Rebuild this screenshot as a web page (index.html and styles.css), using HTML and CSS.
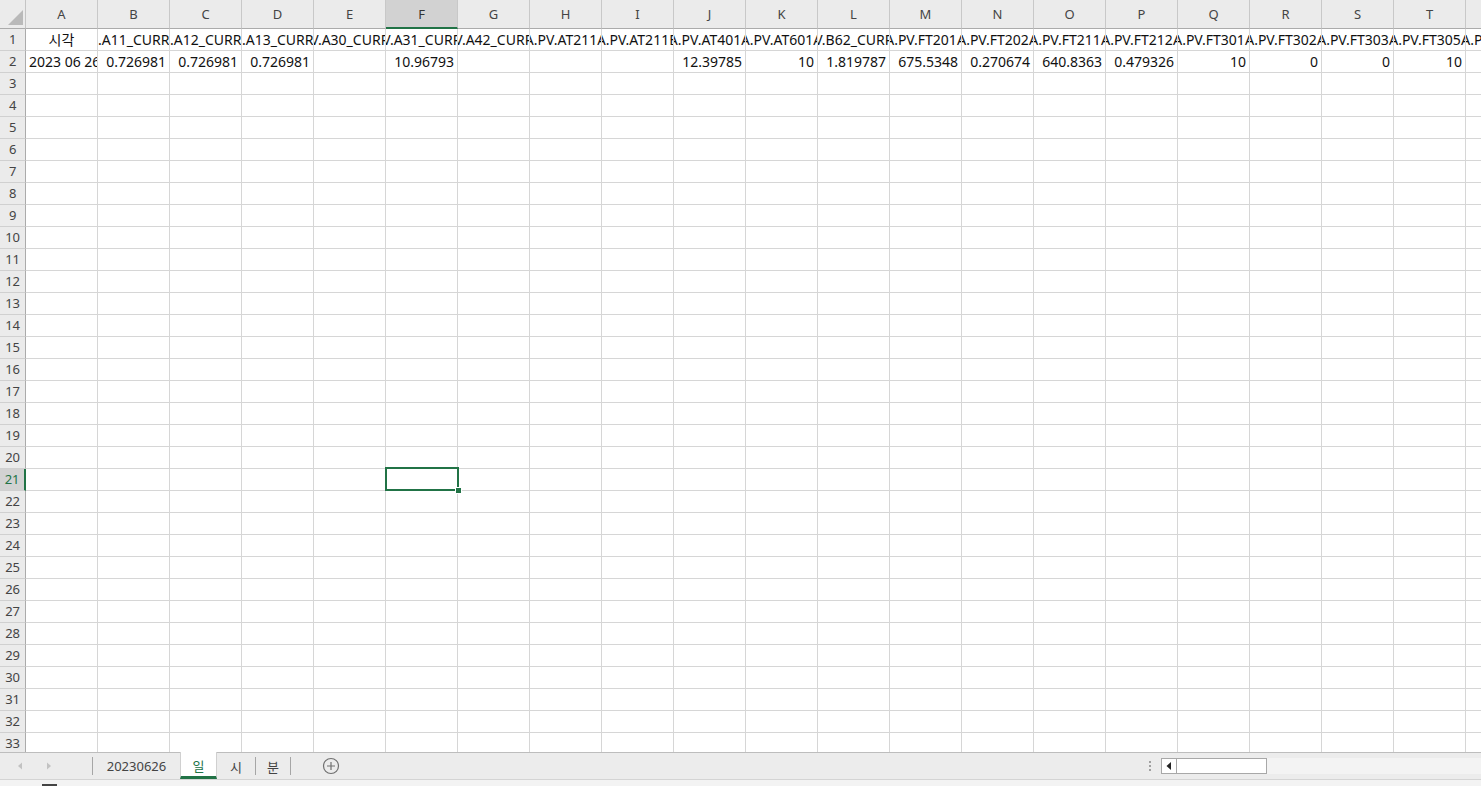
FILE: index.html
```html
<!DOCTYPE html>
<html lang="ko">
<head>
<meta charset="utf-8">
<title>20230626 - 일</title>
<link rel="stylesheet" href="styles.css">
</head>
<body>
<div class="app">
  <div class="sheet">
    <div class="colheads">
      <div class="corner"></div>
      <div class="colhead">A</div>
      <div class="colhead">B</div>
      <div class="colhead">C</div>
      <div class="colhead">D</div>
      <div class="colhead">E</div>
      <div class="colhead selected">F</div>
      <div class="colhead">G</div>
      <div class="colhead">H</div>
      <div class="colhead">I</div>
      <div class="colhead">J</div>
      <div class="colhead">K</div>
      <div class="colhead">L</div>
      <div class="colhead">M</div>
      <div class="colhead">N</div>
      <div class="colhead">O</div>
      <div class="colhead">P</div>
      <div class="colhead">Q</div>
      <div class="colhead">R</div>
      <div class="colhead">S</div>
      <div class="colhead">T</div>
      <div class="colhead">U</div>
    </div>
    <div class="body">
      <div class="rowheads">
        <div class="rowhead">1</div>
        <div class="rowhead">2</div>
        <div class="rowhead">3</div>
        <div class="rowhead">4</div>
        <div class="rowhead">5</div>
        <div class="rowhead">6</div>
        <div class="rowhead">7</div>
        <div class="rowhead">8</div>
        <div class="rowhead">9</div>
        <div class="rowhead">10</div>
        <div class="rowhead">11</div>
        <div class="rowhead">12</div>
        <div class="rowhead">13</div>
        <div class="rowhead">14</div>
        <div class="rowhead">15</div>
        <div class="rowhead">16</div>
        <div class="rowhead">17</div>
        <div class="rowhead">18</div>
        <div class="rowhead">19</div>
        <div class="rowhead">20</div>
        <div class="rowhead selected">21</div>
        <div class="rowhead">22</div>
        <div class="rowhead">23</div>
        <div class="rowhead">24</div>
        <div class="rowhead">25</div>
        <div class="rowhead">26</div>
        <div class="rowhead">27</div>
        <div class="rowhead">28</div>
        <div class="rowhead">29</div>
        <div class="rowhead">30</div>
        <div class="rowhead">31</div>
        <div class="rowhead">32</div>
        <div class="rowhead">33</div>
        <div class="rowhead">34</div>
      </div>
      <div class="cells">
        <div class="row">
          <div class="cell c"><span>시각</span></div>
          <div class="cell c"><span>DCS.A11_CURRENT</span></div>
          <div class="cell c"><span>DCS.A12_CURRENT</span></div>
          <div class="cell c"><span>DCS.A13_CURRENT</span></div>
          <div class="cell c"><span>DCSV.A30_CURRENT</span></div>
          <div class="cell c"><span>DCSV.A31_CURRENT</span></div>
          <div class="cell c"><span>DCSV.A42_CURRENT</span></div>
          <div class="cell c"><span>A.PV.AT211A</span></div>
          <div class="cell c"><span>A.PV.AT211B</span></div>
          <div class="cell c"><span>A.PV.AT401A</span></div>
          <div class="cell c"><span>A.PV.AT601A</span></div>
          <div class="cell c"><span>DCSV.B62_CURRENT</span></div>
          <div class="cell c"><span>A.PV.FT201A</span></div>
          <div class="cell c"><span>A.PV.FT202A</span></div>
          <div class="cell c"><span>A.PV.FT211A</span></div>
          <div class="cell c"><span>A.PV.FT212A</span></div>
          <div class="cell c"><span>A.PV.FT301A</span></div>
          <div class="cell c"><span>A.PV.FT302A</span></div>
          <div class="cell c"><span>A.PV.FT303A</span></div>
          <div class="cell c"><span>A.PV.FT305A</span></div>
          <div class="cell c"><span>A.PV.FT306A</span></div>
        </div>
        <div class="row">
          <div class="cell"><span>2023 06 26 00:00</span></div>
          <div class="cell r"><span>0.726981</span></div>
          <div class="cell r"><span>0.726981</span></div>
          <div class="cell r"><span>0.726981</span></div>
          <div class="cell"></div>
          <div class="cell r"><span>10.96793</span></div>
          <div class="cell"></div>
          <div class="cell"></div>
          <div class="cell"></div>
          <div class="cell r"><span>12.39785</span></div>
          <div class="cell r"><span>10</span></div>
          <div class="cell r"><span>1.819787</span></div>
          <div class="cell r"><span>675.5348</span></div>
          <div class="cell r"><span>0.270674</span></div>
          <div class="cell r"><span>640.8363</span></div>
          <div class="cell r"><span>0.479326</span></div>
          <div class="cell r"><span>10</span></div>
          <div class="cell r"><span>0</span></div>
          <div class="cell r"><span>0</span></div>
          <div class="cell r"><span>10</span></div>
          <div class="cell"></div>
        </div>
        <div class="selection"><div class="fill-handle"></div></div>
      </div>
    </div>
  </div>

  <div class="tabbar">
    <div class="tabnav">
      <svg class="navarrow" width="6" height="8" viewBox="0 0 6 8"><path d="M5 0.5 L1 4 L5 7.5 Z" fill="#c2c2c2"/></svg>
      <svg class="navarrow" width="6" height="8" viewBox="0 0 6 8"><path d="M1 0.5 L5 4 L1 7.5 Z" fill="#c2c2c2"/></svg>
    </div>
    <div class="tabsep"></div>
    <div class="tab tab-wide">20230626</div>
    <div class="tab active">일</div>
    <div class="tab">시</div>
    <div class="tabsep"></div>
    <div class="tab tab-narrow">분</div>
    <div class="tabsep"></div>
    <div class="addsheet">
      <svg width="18" height="18" viewBox="0 0 18 18"><circle cx="9" cy="9" r="7.5" fill="none" stroke="#707070" stroke-width="1.2"/><path d="M9 5 V13 M5 9 H13" stroke="#707070" stroke-width="1.2"/></svg>
    </div>
    <div class="spacer"></div>
    <div class="splitter"><span></span><span></span><span></span></div>
    <div class="hscroll">
      <div class="hbtn"><svg width="6" height="8" viewBox="0 0 6 8"><path d="M5 0 L0.5 4 L5 8 Z" fill="#222"/></svg></div>
      <div class="hthumb"></div>
      <div class="htrack"></div>
    </div>
  </div>
  <div class="statusbar"><div class="status-icon"></div></div>
</div>
</body>
</html>
```

FILE: styles.css
```css
html, body {
  margin: 0;
  padding: 0;
  background: #ffffff;
}

body {
  font-family: "Noto Sans", "Noto Sans CJK KR", sans-serif;
  color: #000;
  overflow: hidden;
}

.app {
  display: flex;
  flex-direction: column;
  width: 1481px;
  height: 786px;
  overflow: hidden;
}

/* ---------- worksheet ---------- */

.sheet {
  flex: none;
  height: 752px;
  overflow: hidden;
}

.colheads {
  display: flex;
  height: 29px;
}

.corner {
  flex: none;
  width: 26px;
  height: 29px;
  box-sizing: border-box;
  background: #ebebeb;
  border-right: 1px solid #c4c4c4;
  border-bottom: 1px solid #ababab;
  position: relative;
}

.corner::after {
  content: "";
  position: absolute;
  right: 2px;
  bottom: 3px;
  width: 15px;
  height: 15px;
  background: #b9b9b9;
  clip-path: polygon(100% 0, 100% 100%, 0 100%);
}

.colhead {
  flex: none;
  width: 72px;
  height: 29px;
  box-sizing: border-box;
  background: #ebebeb;
  border-right: 1px solid #c8c8c8;
  border-bottom: 1px solid #ababab;
  display: flex;
  align-items: center;
  justify-content: center;
  font-size: 13px;
  color: #444;
}

.colhead.selected {
  background: #d2d2d2;
  border-bottom: 2px solid #217346;
  color: #333;
}

.body {
  display: flex;
}

.rowheads {
  flex: none;
  width: 26px;
}

.rowhead {
  height: 22px;
  box-sizing: border-box;
  background: #ebebeb;
  border-right: 1px solid #ababab;
  border-bottom: 1px solid #d0d0d0;
  font-size: 13px;
  line-height: 21px;
  color: #444;
  text-align: center;
  letter-spacing: -0.2px;
}

.rowhead.selected {
  background: #d2d2d2;
  border-right: 2px solid #217346;
  color: #217346;
}

.cells {
  position: relative;
  flex: 1;
  height: 748px;
  background-color: #fff;
  background-image:
    repeating-linear-gradient(to right, transparent 0 71px, #d6d6d6 71px 72px),
    repeating-linear-gradient(to bottom, transparent 0 21px, #d6d6d6 21px 22px);
}

.row {
  display: grid;
  grid-template-columns: repeat(21, 71px);
  column-gap: 1px;
  height: 21px;
  margin-bottom: 1px;
}

.cell {
  display: flex;
  align-items: center;
  justify-content: flex-start;
  overflow: hidden;
  white-space: nowrap;
  font-size: 14px;
  line-height: 21px;
  padding: 0 3px;
  color: #111;
}

.cell span {
  flex: none;
}

.cell.c {
  justify-content: center;
  padding: 0;
}

.cell.r {
  justify-content: flex-end;
}

/* active cell F21 */
.selection {
  position: absolute;
  left: 359px;
  top: 438px;
  width: 74px;
  height: 24px;
  box-sizing: border-box;
  border: 2px solid #217346;
}

.fill-handle {
  position: absolute;
  right: -5px;
  bottom: -5px;
  width: 5px;
  height: 5px;
  background: #217346;
  border: 1px solid #fff;
}

/* ---------- sheet tabs ---------- */

.tabbar {
  flex: none;
  height: 27px;
  box-sizing: border-box;
  border-top: 1px solid #bdbdbd;
  background: #ececec;
  display: flex;
  align-items: stretch;
}

.tabnav {
  flex: none;
  width: 92px;
  display: flex;
  align-items: center;
  padding-left: 17px;
  gap: 23px;
  box-sizing: border-box;
}

.tabsep {
  flex: none;
  width: 1px;
  align-self: center;
  height: 18px;
  background: #a6a6a6;
}

.tab {
  flex: none;
  width: 38px;
  display: flex;
  align-items: center;
  justify-content: center;
  font-size: 13px;
  color: #444;
  box-sizing: border-box;
}

.tab-wide {
  width: 87px;
}

.tab-narrow {
  width: 34px;
}

.tab.active {
  width: 37px;
  margin-top: -1px;
  background: #ffffff;
  border-bottom: 3px solid #217346;
  border-left: 1px solid #d0d0d0;
  border-right: 1px solid #d0d0d0;
  color: #217346;
  padding-top: 2px;
}

.addsheet {
  flex: none;
  display: flex;
  align-items: center;
  margin-left: 31px;
}

.spacer {
  flex: 1;
}

.splitter {
  flex: none;
  width: 20px;
  display: flex;
  flex-direction: column;
  align-items: center;
  justify-content: center;
  gap: 2px;
  margin-right: 1px;
}

.splitter span {
  width: 2px;
  height: 2px;
  background: #a0a0a0;
}

.hscroll {
  flex: none;
  width: 320px;
  display: flex;
  align-items: center;
}

.hbtn {
  flex: none;
  width: 15px;
  height: 16px;
  box-sizing: border-box;
  border: 1px solid #a8a8a8;
  border-right: none;
  background: #fff;
  display: flex;
  align-items: center;
  justify-content: center;
}

.hthumb {
  flex: none;
  width: 91px;
  height: 16px;
  box-sizing: border-box;
  border: 1px solid #a8a8a8;
  background: #fff;
}

.htrack {
  flex: 1;
  height: 16px;
  background: #f3f3f3;
}

.statusbar {
  flex: none;
  height: 7px;
  box-sizing: border-box;
  border-top: 1px solid #d4d4d4;
  background: #f3f3f3;
  position: relative;
}

.status-icon {
  position: absolute;
  left: 42px;
  bottom: 0;
  width: 15px;
  height: 2px;
  background: #444;
}
```
